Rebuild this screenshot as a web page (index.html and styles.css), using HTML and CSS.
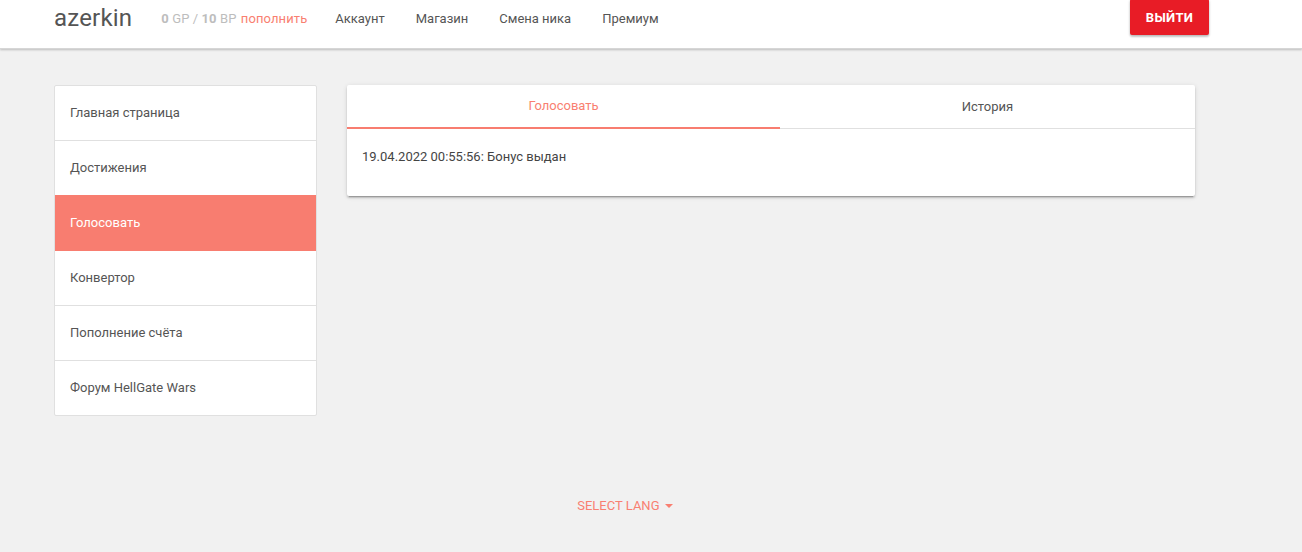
FILE: index.html
```html
<!DOCTYPE html>
<html lang="ru">
<head>
<meta charset="utf-8">
<title>azerkin</title>
<link rel="stylesheet" href="styles.css">
</head>
<body>
<header class="topbar">
  <div class="topbar-inner">
    <a class="logo" href="#">azerkin</a>
    <span class="balance"><b>0</b> GP / <b>10</b> BP <a class="refill" href="#">пополнить</a></span>
    <nav class="topnav">
      <a href="#">Аккаунт</a>
      <a href="#">Магазин</a>
      <a href="#">Смена ника</a>
      <a href="#">Премиум</a>
    </nav>
    <a class="logout" href="#">Выйти</a>
  </div>
</header>
<main class="layout">
  <aside class="sidebar">
    <a class="side-item" href="#">Главная страница</a>
    <a class="side-item" href="#">Достижения</a>
    <a class="side-item active" href="#">Голосовать</a>
    <a class="side-item" href="#">Конвертор</a>
    <a class="side-item" href="#">Пополнение счёта</a>
    <a class="side-item" href="#">Форум HellGate Wars</a>
  </aside>
  <section class="card">
    <div class="tabs">
      <a class="tab active" href="#">Голосовать</a>
      <a class="tab" href="#">История</a>
    </div>
    <div class="card-body">19.04.2022 00:55:56: Бонус выдан</div>
  </section>
</main>
<footer class="footer">
  <a class="lang" href="#">Select lang <span class="caret"></span></a>
</footer>
</body>
</html>
```
FILE: styles.css
```css
* { box-sizing: border-box; }
html, body { margin: 0; padding: 0; }
body {
  background: #f1f1f1;
  font-family: Roboto, "Noto Sans", sans-serif;
  color: #555;
  font-size: 13px;
}
a { text-decoration: none; color: inherit; }

.topbar {
  background: #fff;
  height: 49px;
  box-shadow: 0 1px 2px rgba(0,0,0,0.22);
  border-bottom: 1px solid #d6d6d6;
}
.topbar-inner {
  width: 1155px;
  margin-left: 54px;
  height: 36px;
  display: flex;
  align-items: center;
}
.logo {
  font-size: 24px;
  color: #555;
  letter-spacing: 0.2px;
  margin-right: 30px;
  margin-top: -1px;
}
.balance {
  color: #bdbdbd;
  font-size: 13px;
  margin-right: 27px;
  margin-left: -1px;
  letter-spacing: 0.1px;
}
.balance b { font-weight: 700; }
.refill { color: #f97f71; margin-left: 1px; }
.topnav { display: flex; gap: 31px; margin-left: 1px; }
.topnav a { color: #555; font-size: 13px; }
.logout {
  margin-left: auto;
  background: #e81c26;
  color: #fff;
  font-weight: 700;
  text-transform: uppercase;
  font-size: 13px;
  height: 36px;
  width: 79px;
  margin-top: -2px;
  display: flex;
  align-items: center;
  justify-content: center;
  border-radius: 2px;
  box-shadow: 0 2px 2px rgba(0,0,0,0.14), 0 1px 3px rgba(0,0,0,0.2);
  letter-spacing: 0.3px;
}

.layout {
  margin-left: 54px;
  width: 1141px;
  padding-top: 36px;
  display: flex;
  align-items: flex-start;
  gap: 30px;
}
.sidebar {
  width: 263px;
  flex: none;
  background: #fff;
  border: 1px solid #e0e0e0;
  border-radius: 2px;
  display: flex;
  flex-direction: column;
  overflow: hidden;
}
.side-item {
  height: 55px;
  display: flex;
  align-items: center;
  padding-left: 15px;
  padding-bottom: 2px;
  color: #555;
  border-bottom: 1px solid #e0e0e0;
  font-size: 13px;
}
.side-item:last-child { border-bottom: none; height: 54px; }
.side-item.active {
  background: #f87d70;
  color: #fff;
  border-bottom-color: #f87d70;
  margin: -1px -1px 0;
  height: 56px;
  padding-left: 16px;
  padding-bottom: 0;
}

.card {
  flex: 1;
  background: #fff;
  border-radius: 2px;
  box-shadow: 0 2px 2px 0 rgba(0,0,0,0.14), 0 1px 5px 0 rgba(0,0,0,0.12), 0 3px 1px -2px rgba(0,0,0,0.2);
  height: 111px;
}
.tabs {
  display: flex;
  height: 44px;
  border-bottom: 1px solid #e0e0e0;
}
.tab {
  flex: 1;
  display: flex;
  align-items: center;
  justify-content: center;
  color: #555;
  font-size: 13px;
  padding-bottom: 1px;
}
.tab.active {
  flex: none;
  width: 433px;
  color: #f97f71;
  border-bottom: 2px solid #f87d70;
  margin-bottom: -1px;
}
.card-body {
  padding: 20px 15px;
  font-size: 13px;
  color: #444;
}

.footer {
  text-align: center;
  padding-top: 82px;
  padding-right: 52px;
}
.lang {
  color: #f97f71;
  text-transform: uppercase;
  font-size: 13px;
}
.caret {
  display: inline-block;
  width: 0;
  height: 0;
  border-left: 4px solid transparent;
  border-right: 4px solid transparent;
  border-top: 4px solid #f97f71;
  vertical-align: middle;
  margin-left: 2px;
  margin-top: -2px;
}
```
